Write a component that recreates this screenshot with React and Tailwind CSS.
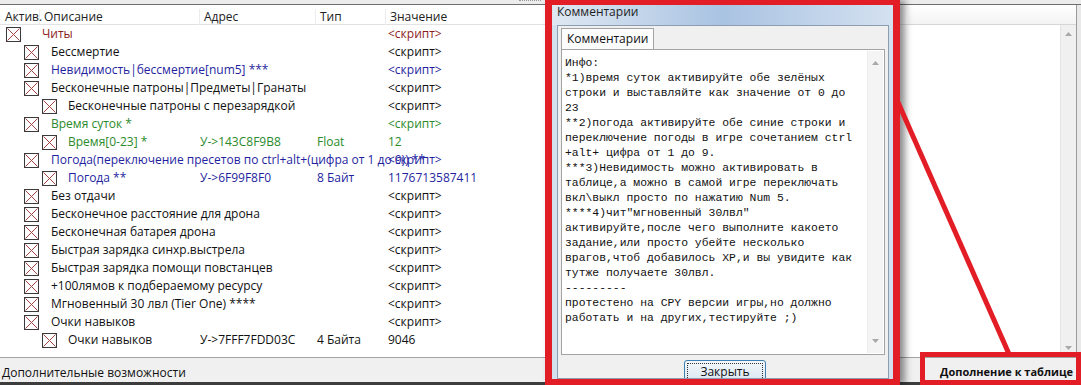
import React from 'react';

const rows = [
    { lvl: 0, text: 'Читы', color: 'text-[#8c1d1d]', value: '<скрипт>' },
    { lvl: 1, text: 'Бессмертие', color: 'text-[#111]', value: '<скрипт>' },
    { lvl: 1, text: 'Невидимость|бессмертие[num5] ***', color: 'text-[#1f1fa0]', value: '<скрипт>' },
    { lvl: 1, text: 'Бесконечные патроны|Предметы|Гранаты', color: 'text-[#111]', value: '<скрипт>' },
    { lvl: 2, text: 'Бесконечные патроны с перезарядкой', color: 'text-[#111]', value: '<скрипт>' },
    { lvl: 1, text: 'Время суток *', color: 'text-[#2b8a2b]', value: '<скрипт>' },
    { lvl: 2, text: 'Время[0-23] *', color: 'text-[#2b8a2b]', addr: 'У->143C8F9B8', type: 'Float', value: '12' },
    { lvl: 1, text: 'Погода(переключение пресетов по ctrl+alt+(цифра от 1 до 9)) **', color: 'text-[#1f1fa0]', value: '<скрипт>' },
    { lvl: 2, text: 'Погода **', color: 'text-[#1f1fa0]', addr: 'У->6F99F8F0', type: '8 Байт', value: '1176713587411' },
    { lvl: 1, text: 'Без отдачи', color: 'text-[#111]', value: '<скрипт>' },
    { lvl: 1, text: 'Бесконечное расстояние для дрона', color: 'text-[#111]', value: '<скрипт>' },
    { lvl: 1, text: 'Бесконечная батарея дрона', color: 'text-[#111]', value: '<скрипт>' },
    { lvl: 1, text: 'Быстрая зарядка синхр.выстрела', color: 'text-[#111]', value: '<скрипт>' },
    { lvl: 1, text: 'Быстрая зарядка помощи повстанцев', color: 'text-[#111]', value: '<скрипт>' },
    { lvl: 1, text: '+100лямов к подбераемому ресурсу', color: 'text-[#111]', value: '<скрипт>' },
    { lvl: 1, text: 'Мгновенный 30 лвл (Tier One) ****', color: 'text-[#111]', value: '<скрипт>' },
    { lvl: 1, text: 'Очки навыков', color: 'text-[#111]', value: '<скрипт>' },
    { lvl: 2, text: 'Очки навыков', color: 'text-[#111]', addr: 'У->7FFF7FDD03C', type: '4 Байта', value: '9046' },
];

const notes = [
    'Инфо:',
    '*1)время суток активируйте обе зелёных',
    'строки и выставляйте как значение от 0 до',
    '23',
    '**2)погода активируйте обе синие строки и',
    'переключение погоды в игре сочетанием ctrl',
    '+alt+ цифра от 1 до 9.',
    '***3)Невидимость можно активировать в',
    'таблице,а можно в самой игре переключать',
    'вкл\\выкл просто по нажатию Num 5.',
    '****4)чит"мгновенный 30лвл"',
    'активируйте,после чего выполните какоето',
    'задание,или просто убейте несколько',
    'врагов,чтоб добавилось XP,и вы увидите как',
    'тутже получаете 30лвл.',
    '---------',
    'протестено на CPY версии игры,но должно',
    'работать и на других,тестируйте ;)',
];

// checkbox offsets per tree level: [box left, gap to text]
const indent = {
    0: 'pl-[6px] gap-[21px]',
    1: 'pl-[24px] gap-[12px]',
    2: 'pl-[42px] gap-[11px]',
};

function CheckBox() {
    return (
        <svg width="15" height="15" viewBox="0 0 15 15" className="shrink-0">
            <rect x="0.5" y="0.5" width="14" height="14" fill="#fff" stroke="#3a3a3a" />
            <path d="M1.5 1.5L13.5 13.5M13.5 1.5L1.5 13.5" stroke="#a64444" strokeWidth="1" />
        </svg>
    );
}

function Arrow({ down }) {
    return (
        <svg width="7" height="4" viewBox="0 0 7 4">
            <path d={down ? 'M0 0L3.5 4L7 0Z' : 'M0 4L3.5 0L7 4Z'} fill="#a8a8a8" />
        </svg>
    );
}

function Row({ r }) {
    return (
        <div className={`flex h-[18px] items-center whitespace-nowrap ${r.color}`}>
            <div className={`w-[200px] shrink-0 flex items-center ${indent[r.lvl]}`}>
                <CheckBox />
                <span>{r.text}</span>
            </div>
            <div className="w-[117px] shrink-0">{r.addr}</div>
            <div className="w-[71px] shrink-0">{r.type}</div>
            <div className="shrink-0">{r.value}</div>
        </div>
    );
}

function CommentsDialog() {
    return (
        <div className="absolute left-[545px] top-0 w-[355px] h-[385px] border-x-[7px] border-t-[5px] border-b-[6px] border-[#e31d25] bg-[#d3e0ee] shadow-[5px_0_7px_rgba(0,0,0,0.45)] flex flex-col">
            <div className="h-[20px] shrink-0 flex items-start pl-[5px] leading-[14px] text-[12px] text-[#1e1e1e] bg-gradient-to-r from-[#dfe8f2] via-[#a9c3e2] to-[#d4e1f0]">
                Комментарии
            </div>
            <div className="flex-1 mx-[5px] mr-[4px] border border-[#8d9db1] bg-[#f0f0f0] overflow-hidden flex flex-col">
                <div className="pl-[3px] pt-[2px] flex">
                    <div className="h-[21px] px-[5px] flex items-center border border-b-0 border-[#a3a3a3] bg-[#fcfcfc] text-[12px] text-[#111]">
                        Комментарии
                    </div>
                </div>
                <div className="mx-[3px] h-[306px] shrink-0 border border-[#a3a3a3] bg-white p-[1px] flex">
                    <div className="flex-1 pl-[2px] pt-[5px] font-['Liberation_Mono',monospace] text-[11.4px] leading-[15px] text-[#111]">
                        {notes.map((l, i) => (
                            <div key={i} className="whitespace-pre">{l}</div>
                        ))}
                    </div>
                    <div className="w-[16px] bg-[#f4f4f4] border-l border-[#ececec] flex flex-col items-center justify-between py-[10px]">
                        <Arrow />
                        <Arrow down />
                    </div>
                </div>
                <div className="flex justify-center pt-[5px] pl-[4px]">
                    <div className="w-[82px] h-[23px] shrink-0 rounded-[3px] border border-[#3c7fb1] bg-gradient-to-b from-[#f4f8fb] to-[#d7e6f1] p-[2px]">
                        <div className="h-full border border-dotted border-[#333] flex items-center justify-center text-[12px] text-[#111]">
                            Закрыть
                        </div>
                    </div>
                </div>
            </div>
        </div>
    );
}

export default function App() {
    return (
        <div className="relative w-[1081px] h-[385px] overflow-hidden bg-white font-['Open_Sans',sans-serif] text-[12px] text-[#111]">
            <div className="h-[5px] bg-[#ececec] border-b border-[#6d6d6d] flex justify-end pr-[540px]">
                <div className="w-[22px] h-[3px] border-t border-dotted border-[#999]" />
            </div>
            <div className="flex h-[352px]">
                <div className="w-[908px] shrink-0 flex flex-col">
                    <div className="h-[20px] flex items-start pt-[4px] leading-[16px] border-b border-[#e2e2e2] text-[#222]">
                        <div className="w-[40px] pl-[5px] border-r border-[#ececec]">Актив.</div>
                        <div className="w-[160px] pl-[4px] border-r border-[#ececec]">Описание</div>
                        <div className="w-[116px] pl-[4px] border-r border-[#ececec]">Адрес</div>
                        <div className="w-[70px] pl-[4px] border-r border-[#ececec]">Тип</div>
                        <div className="pl-[4px]">Значение</div>
                    </div>
                    <div>
                        {rows.map((r, i) => (
                            <Row key={i} r={r} />
                        ))}
                    </div>
                </div>
                <div className="flex-1 flex">
                    <div className="flex-1 flex flex-col">
                        <div className="h-[20px] bg-gradient-to-b from-white to-[#f3f3f3] border-b border-[#d6d6d6]" />
                        <div className="flex-1 flex">
                            <div className="flex-1 bg-white" />
                            <div className="w-[16px] bg-[#f0f0f0] border-l border-[#e4e4e4] flex flex-col items-center justify-between py-[7px]">
                                <Arrow />
                                <Arrow down />
                            </div>
                        </div>
                    </div>
                    <div className="w-[5px] border-l border-[#9a9a9a] bg-[#e9e9e9]" />
                </div>
            </div>
            <div className="h-[28px] border-t border-[#a3a3a3] bg-[#f0f0f0] border-b-[3px] border-b-[#3d3d3d] flex items-center justify-between pt-[5px] pl-[2px] pr-[8px]">
                <span>Дополнительные возможности</span>
                <span className="font-bold text-[11px]">Дополнение к таблице</span>
            </div>

            <CommentsDialog />

            <svg className="absolute left-0 top-0 pointer-events-none" width="1081" height="385">
                <line x1="897" y1="100" x2="1009" y2="354" stroke="#e31d25" strokeWidth="5" />
            </svg>
            <div className="absolute left-[920px] top-[352px] w-[161px] h-[33px] border-[5px] border-[#e31d25]" />
        </div>
    );
}
